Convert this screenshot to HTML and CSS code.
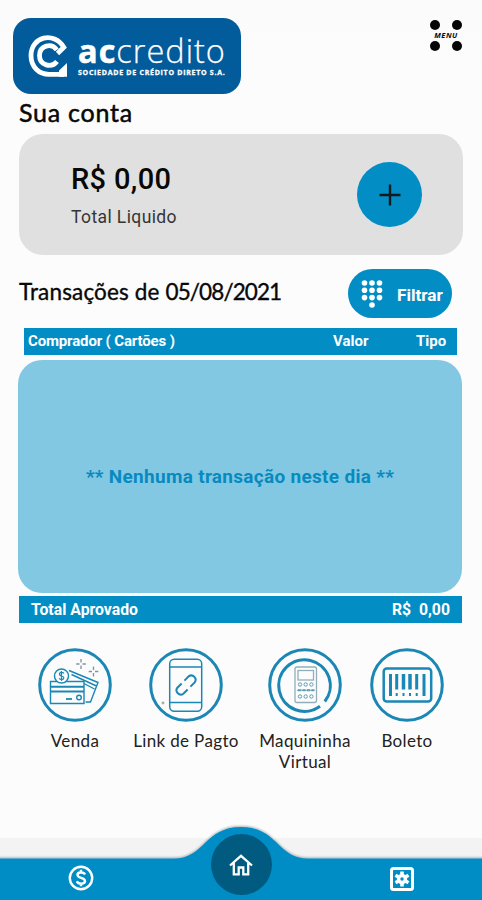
FILE: index.html
```html
<!DOCTYPE html>
<html lang="pt-BR">
<head>
<meta charset="utf-8">
<meta name="viewport" content="width=device-width, initial-scale=1">
<title>Accredito</title>
<link rel="stylesheet" href="styles.css">
</head>
<body>
<div class="app">
  <header class="top">
    <div class="logo">
      <svg class="mark" width="40" height="44" viewBox="0 0 40 44" fill="none" stroke="#fff" stroke-width="4.800">
        <path d="M29.500 19.500L35.800 13.300C26-3 3 2.500 3 21.500C3 33 11 40.300 21 40.300H36"/>
        <path d="M28.800 15.800C23.500 8.500 11.500 11.500 11.500 21.500C11.500 31.500 23.500 34.500 29 27.500"/>
        <path d="M39 29V42.700H31V36.500Z" fill="#fff" stroke="none"/>
      </svg>
      <div class="wordmark">
        <div class="brand"><b>ac</b><span>credito</span></div>
        <div class="tagline">SOCIEDADE DE CRÉDITO DIRETO S.A.</div>
      </div>
    </div>
    <div class="menu">
      <i></i><i></i>
      <span>MENU</span>
      <i></i><i></i>
    </div>
  </header>
  <h1>Sua conta</h1>
  <section class="balance">
    <div>
      <div class="amount">R$ 0,00</div>
      <div class="caption">Total Liquido</div>
    </div>
    <div class="add">
      <svg width="22" height="22" viewBox="0 0 22 22" stroke="#141a1e" stroke-width="2.400"><path d="M11 0.500V21.500M0.500 11H21.500"/></svg>
    </div>
  </section>
  <div class="heading">
    <h2>Transações de <span class="date">05/08/2021</span></h2>
    <div class="filter">
      <svg width="22" height="30" viewBox="0 0 22 30" fill="#fff">
        <circle cx="3.500" cy="4" r="2.800"/><circle cx="11" cy="4" r="2.800"/><circle cx="18.500" cy="4" r="2.800"/>
        <circle cx="3.500" cy="11.300" r="2.800"/><circle cx="11" cy="11.300" r="2.800"/><circle cx="18.500" cy="11.300" r="2.800"/>
        <circle cx="3.500" cy="18.600" r="2.800"/><circle cx="11" cy="18.600" r="2.800"/><circle cx="18.500" cy="18.600" r="2.800"/>
        <circle cx="11" cy="26" r="2.800"/>
      </svg>
      <span>Filtrar</span>
    </div>
  </div>
  <div class="columns"><span class="buyer">Comprador ( Cartões )</span><span class="value">Valor</span><span class="type">Tipo</span></div>
  <div class="empty"><span>** Nenhuma transação neste dia **</span></div>
  <div class="total"><span class="total-label">Total Aprovado</span><span class="total-value">R$&nbsp; 0,00</span></div>
  <nav class="actions">
    <div class="action">
      <svg width="74" height="74" viewBox="0 0 74 74" fill="none" stroke="#1b87b5" stroke-width="1.400">
        <circle cx="37" cy="37" r="35.300" stroke-width="3"/>
        <path d="M31 22.500L60 34.500L52.500 54H47.500M33.500 26.500L58.500 38M42 33.500L56.500 41"/>
        <path d="M12.500 33.500H46V55.500H12.500Z" fill="#fcfcfc"/>
        <path d="M12.500 38.700H46M12.500 43.500H46" stroke-width="1.900"/>
        <path d="M28 51H34" stroke-width="1.800"/><circle cx="41" cy="49.500" r="2.300"/>
        <circle cx="23.500" cy="28" r="7" fill="#fcfcfc"/>
        <path d="M26 25.500C24.500 23.500 21 24.300 21.500 26.500C22 28.500 25.800 27.500 25.800 29.800C25.800 32.200 22.500 32 21 30.300M23.500 23V33" stroke-width="1.200"/>
        <g stroke="#80919b" stroke-width="1.300"><path d="M43 11V14.500M43 17.500V21M38.200 16H41.500M44.500 16H47.800M55.500 18.500V22M55.500 25V28.500M50.700 23.500H54M57 23.500H60.300"/></g>
      </svg>
      <span>Venda</span>
    </div>
    <div class="action">
      <svg width="74" height="74" viewBox="0 0 74 74" fill="none" stroke="#1b87b5" stroke-width="1.500">
        <circle cx="37" cy="37" r="35.300" stroke-width="3"/>
        <rect x="20.700" y="11.300" width="32" height="52" rx="4.500"/>
        <path d="M20.700 19H52.700M20.700 54.500H52.700"/>
        <g transform="rotate(-45 37 37)" stroke-width="2"><path d="M35 32.800H29A4.300 4.300 0 0 0 29 41.300H35M39 32.800H45A4.300 4.300 0 0 1 45 41.300H39"/></g>
        <circle cx="14" cy="55" r=".7" stroke="#9fb3ac"/>
      </svg>
      <span>Link de Pagto</span>
    </div>
    <div class="action">
      <svg width="74" height="74" viewBox="0 0 74 74" fill="none" stroke="#1b87b5" stroke-width="3">
        <circle cx="37" cy="37" r="35.300"/>
        <path d="M52 58.200A25.800 25.800 0 1 1 56.800 53.500"/>
        <g stroke="#91afba" stroke-width="1.300">
          <rect x="27" y="19" width="21.500" height="35.500" rx="2"/><rect x="30" y="22.500" width="15.500" height="9.500"/>
          <path d="M29 42.300H47"/>
        </g>
        <g stroke="#5a9fb8" stroke-width="1"><circle cx="32" cy="36.500" r="1.700"/><circle cx="37.700" cy="36.500" r="1.700"/><circle cx="43.400" cy="36.500" r="1.700"/><path d="M30 42.300H46" stroke-width="2" stroke-dasharray="3 1.500"/><circle cx="32" cy="48.500" r="1.700"/><circle cx="37.700" cy="48.500" r="1.700"/><circle cx="43.400" cy="48.500" r="1.700"/></g>
      </svg>
      <span>Maquininha<br>Virtual</span>
    </div>
    <div class="action">
      <svg width="74" height="74" viewBox="0 0 74 74" fill="none" stroke="#1b87b5" stroke-width="3">
        <circle cx="37" cy="37" r="35.300"/>
        <rect x="13.700" y="20.500" width="47.500" height="33" rx="3" stroke-width="2.500"/>
        <path d="M20.500 26V48M26.700 26V41.500M46.700 26V41.500M54 26V48"/><path d="M33.500 26V41.500M40 26V41.500" stroke-width="3.500"/>
        <path d="M26.700 45V48M33.500 45V48M40 45V48M46.700 45V48" stroke-width="2"/>
      </svg>
      <span>Boleto</span>
    </div>
  </nav>
  <footer class="tabs">
    <svg class="tabs-shape" width="482" height="80" viewBox="0 0 482 80">
      <defs><filter id="lift" x="-5%" y="-20%" width="110%" height="140%"><feDropShadow dx="0" dy="-1" stdDeviation="1.300" flood-color="#000" flood-opacity=".3"/></filter></defs>
      <path filter="url(#lift)" fill="#028dc5" d="M-5 38.500H174C205 38.500 204 7 241 7S277 38.500 308 38.500H487V90H-5Z"/>
    </svg>
    <div class="tab-row">
      <div class="tab money">
        <svg width="26" height="26" viewBox="0 0 26 26" fill="none" stroke="#fff" stroke-width="2.400"><circle cx="13" cy="13" r="11.200"/><path d="M17 9.500C15.500 6.500 9.300 7 9.500 10C9.700 13.500 17 12.300 17 16C17 19.400 10.500 19.700 8.800 16.200M13 4.800V7.800M13 18.300V21.300"/></svg>
      </div>
      <div class="tab home">
        <svg width="24" height="22" viewBox="0 0 24 22" fill="none" stroke="#fff" stroke-width="2.300"><path d="M1 11.500L12 1.800L23 11.500M4.800 9V20.300H9.700V13.500H14.300V20.300H19.200V9"/></svg>
      </div>
      <div class="tab config">
        <svg width="24" height="24" viewBox="0 0 24 24" fill="none" stroke="#fff"><rect x="1.500" y="1.500" width="21" height="21" rx="2" stroke-width="3"/><g stroke-width="3.600"><path d="M12 4.500V19.500M5.500 8.250L18.500 15.750M18.500 8.250L5.500 15.750"/></g><circle cx="12" cy="12" r="5.200" fill="#fff" stroke="none"/><circle cx="12" cy="12" r="1.700" fill="#028dc5" stroke="none"/></svg>
      </div>
    </div>
  </footer>
</div>
</body>
</html>
```
FILE: styles.css
```css
* { box-sizing: border-box; }
body { margin: 0; background: #fcfcfc; }
.app { width: 482px; height: 900px; overflow: hidden; display: flex; flex-direction: column; font-family: Lato, "Liberation Sans", sans-serif; color: #080808; background: linear-gradient(#fbfbfc, #fcfcfc 80px); }
h1, h2 { margin: 0; font-weight: 400; white-space: nowrap; -webkit-text-stroke: .5px #080808; }
.top { height: 94px; padding: 18px 20px 0 13px; display: flex; justify-content: space-between; flex: none; }
.logo { width: 228px; height: 76px; border-radius: 18px; background: #025b9b; color: #fff; display: flex; padding: 16px 0 0 15px; }
.mark { flex: none; }
.wordmark { margin-left: 10px; white-space: nowrap; }
.brand { font-family: "Open Sans", sans-serif; font-size: 32.500px; line-height: 34px; height: 35px; letter-spacing: 1px; }
.brand b { font-weight: 700; -webkit-text-stroke: .5px #fff; }
.brand span { font-weight: 300; -webkit-text-stroke: .25px #fff; }
.tagline { font: 700 7px/8px "Open Sans", sans-serif; letter-spacing: .73px; -webkit-text-stroke: .3px #fff; }
.menu { width: 32px; height: 32px; margin-top: 2px; display: grid; grid-template-columns: 10px 10px; grid-template-rows: 10px 11px 10px; justify-content: space-between; }
.menu i { width: 10px; height: 10px; border-radius: 50%; background: #050505; }
.menu span { grid-column: 1 / 3; font: italic 700 7.5px/11px "Open Sans", sans-serif; text-align: center; letter-spacing: .5px; }
h1 { height: 40px; padding-left: 19px; font-size: 25px; line-height: 37px; letter-spacing: .75px; flex: none; }
.balance { height: 121px; margin: 0 19px; border-radius: 24px; background: #e0e0e0; padding: 28px 41px 0 52px; display: flex; justify-content: space-between; flex: none; font-family: Roboto, sans-serif; white-space: nowrap; }
.amount { font-size: 29px; font-weight: 500; line-height: 34px; letter-spacing: .35px; }
.caption { font-size: 17.5px; line-height: 22px; margin-top: 10px; letter-spacing: .4px; color: #353535; }
.add { width: 65px; height: 65px; border-radius: 50%; background: #028dc5; display: flex; align-items: center; justify-content: center; }
.heading { height: 49px; margin-top: 14px; padding: 0 30px 0 19px; display: flex; justify-content: space-between; flex: none; }
h2 { font-size: 22.5px; line-height: 46px; letter-spacing: .15px; -webkit-text-stroke-width: .35px; }
.date { letter-spacing: -.9px; }
.filter { width: 104px; height: 49px; border-radius: 25px; background: #028dc5; color: #fff; display: flex; align-items: center; padding-left: 13px; font: 700 17.2px/20px Roboto, sans-serif; }
.filter span { margin-left: 14px; padding-top: 2px; }
.columns, .total { background: #028dc5; color: #fff; display: flex; font: 700 15px/27px Roboto, sans-serif; white-space: pre; height: 27px; flex: none; }
.columns { margin: 10px 25px 0 24px; padding-left: 4px; }
.buyer { width: 305px; letter-spacing: -.15px; }
.value { width: 83px; }
.empty { height: 233px; margin: 5px 20px 0 18px; border-radius: 24px; background: #82c8e2; color: #078ac0; display: flex; justify-content: center; align-items: center; font: 700 19px/24px Roboto, sans-serif; letter-spacing: .3px; flex: none; white-space: nowrap; }
.total { margin: 3px 20px 0 19px; padding: 0 12px; justify-content: space-between; font-size: 15.8px; line-height: 28px; height: 27px; }
.actions { margin-top: 25px; padding-left: 19px; display: grid; grid-template-columns: 112px 110px 128px 76px; height: 190px; flex: none; }
.action { display: flex; flex-direction: column; align-items: center; font-size: 17px; line-height: 21px; text-align: center; white-space: nowrap; color: #222; letter-spacing: .35px; }
.action span { margin-top: 8px; }
.tabs { height: 62px; background: #f3f3f4; display: grid; flex: none; }
.tabs-shape { grid-area: 1 / 1; margin-top: -18px; }
.tab-row { grid-area: 1 / 1; height: 62px; display: grid; grid-template-columns: 161px 160px 161px; position: relative; }
.tab { display: flex; justify-content: center; }
.money { padding-top: 27px; }
.config { padding-top: 29px; }
.home { width: 61px; height: 61px; border-radius: 50%; background: #015b80; justify-self: center; align-items: center; margin-top: -4px; }
```
